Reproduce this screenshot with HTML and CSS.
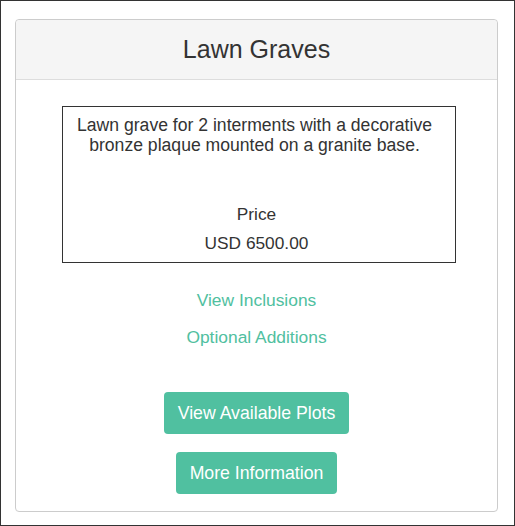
FILE: index.html
```html
<!DOCTYPE html>
<html>
    <head>
        <title>Lawn Graves</title>
        <meta charset="utf-8">
        <link rel="stylesheet" href="styles.css">
    </head>
    <body>
        <div id="frame">
            <div class="panel">
                <div class="panel_heading">
                    <h2>Lawn Graves</h2>
                </div>

                <div class="panel_body">
                    <div class="product_box">
                        <p class="description">Lawn grave for 2 interments with a decorative bronze plaque mounted on a granite base.</p>
                        <p class="price_label">Price</p>
                        <p class="price_value">USD 6500.00</p>
                    </div>

                    <a class="text_link" href="#">View Inclusions</a>
                    <a class="text_link" href="#">Optional Additions</a>

                    <div class="buttons">
                        <button class="btn">View Available Plots</button>
                        <button class="btn">More Information</button>
                    </div>
                </div>
            </div>
        </div>
    </body>
</html>
```

FILE: styles.css
```css
body {margin: 0px; font-family: Arial, "Liberation Sans", sans-serif; color: #333;}

#frame {width: 515px; height: 526px; box-sizing: border-box; border: 1px solid #333; padding: 18px 16px 0px 14px;}

.panel {height: 493px; box-sizing: border-box; border: 1px solid #ccc; border-radius: 4px; background: #fff;}
.panel_heading {height: 60px; box-sizing: border-box; border-bottom: 1px solid #ddd; background: #f5f5f5; border-radius: 4px 4px 0px 0px; display: flex; justify-content: center; align-items: center;}
.panel_heading h2 {margin: 0px; font-size: 25px; font-weight: normal; color: #333;}

.panel_body {display: flex; flex-direction: column; align-items: center; padding-top: 26px;}

.product_box {width: 394px; box-sizing: border-box; border: 1px solid #333; padding: 8px 14px 9px 9px; margin-left: 5px; text-align: center; font-size: 17.3px; line-height: 20px;}
.description {margin: 0px 4px 49px 0px; height: 40px; font-size: 17.6px;}
.price_label {margin: 0px 0px 9px 0px;}
.price_value {margin: 0px;}

.text_link {color: #50c0a0; text-decoration: none; font-size: 17.4px; line-height: 20px;}
.text_link:first-of-type {margin-top: 27px;}
.text_link + .text_link {margin-top: 17px;}

.buttons {display: flex; flex-direction: column; align-items: center; gap: 18px; margin-top: 45px;}
.btn {background: #50c0a0; color: #fff; border: none; border-radius: 4px; font-family: Arial, "Liberation Sans", sans-serif; font-size: 17.7px; height: 42px; padding: 0px 14px;}
```
